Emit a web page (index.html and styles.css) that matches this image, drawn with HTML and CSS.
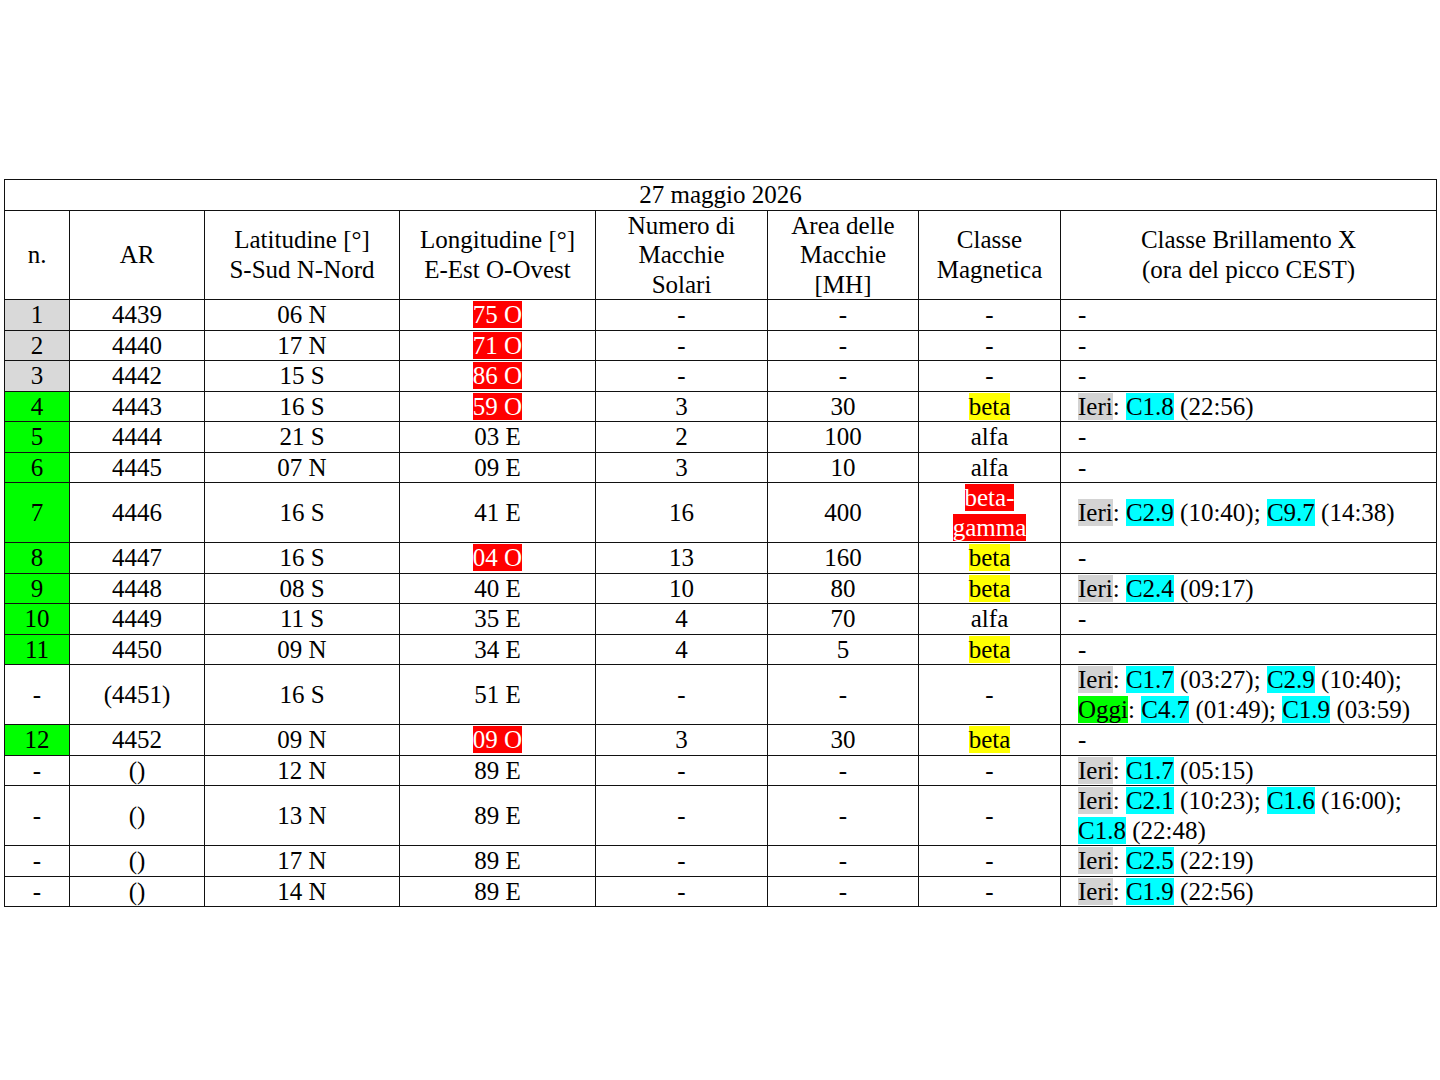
FILE: index.html
```html
<!DOCTYPE html>
<html lang="it">
<head>
<meta charset="utf-8">
<title>Macchie solari</title>
<link rel="stylesheet" href="styles.css">
</head>
<body>
<table class="sun">
  <colgroup>
    <col class="c1"><col class="c2"><col class="c3"><col class="c4"><col class="c5"><col class="c6"><col class="c7"><col class="c8">
  </colgroup>
  <tr><td colspan="8" class="title">27 maggio 2026</td></tr>
  <tr class="head">
    <td>n.</td>
    <td>AR</td>
    <td>Latitudine [°]<br>S-Sud N-Nord</td>
    <td>Longitudine [°]<br>E-Est O-Ovest</td>
    <td>Numero di<br>Macchie<br>Solari</td>
    <td>Area delle<br>Macchie<br>[MH]</td>
    <td>Classe<br>Magnetica</td>
    <td>Classe Brillamento X<br>(ora del picco CEST)</td>
  </tr>
  <tr><td class="gray">1</td><td>4439</td><td>06 N</td><td><span class="red">75 O</span></td><td>-</td><td>-</td><td>-</td><td class="fl">-</td></tr>
  <tr><td class="gray">2</td><td>4440</td><td>17 N</td><td><span class="red">71 O</span></td><td>-</td><td>-</td><td>-</td><td class="fl">-</td></tr>
  <tr><td class="gray">3</td><td>4442</td><td>15 S</td><td><span class="red">86 O</span></td><td>-</td><td>-</td><td>-</td><td class="fl">-</td></tr>
  <tr><td class="green">4</td><td>4443</td><td>16 S</td><td><span class="red">59 O</span></td><td>3</td><td>30</td><td><span class="yel">beta</span></td><td class="fl"><span class="hg">Ieri</span>: <span class="cy">C1.8</span> (22:56)</td></tr>
  <tr><td class="green">5</td><td>4444</td><td>21 S</td><td>03 E</td><td>2</td><td>100</td><td>alfa</td><td class="fl">-</td></tr>
  <tr><td class="green">6</td><td>4445</td><td>07 N</td><td>09 E</td><td>3</td><td>10</td><td>alfa</td><td class="fl">-</td></tr>
  <tr><td class="green">7</td><td>4446</td><td>16 S</td><td>41 E</td><td>16</td><td>400</td><td><span class="red">beta-<br>gamma</span></td><td class="fl"><span class="hg">Ieri</span>: <span class="cy">C2.9</span> (10:40); <span class="cy">C9.7</span> (14:38)</td></tr>
  <tr><td class="green">8</td><td>4447</td><td>16 S</td><td><span class="red">04 O</span></td><td>13</td><td>160</td><td><span class="yel">beta</span></td><td class="fl">-</td></tr>
  <tr><td class="green">9</td><td>4448</td><td>08 S</td><td>40 E</td><td>10</td><td>80</td><td><span class="yel">beta</span></td><td class="fl"><span class="hg">Ieri</span>: <span class="cy">C2.4</span> (09:17)</td></tr>
  <tr><td class="green">10</td><td>4449</td><td>11 S</td><td>35 E</td><td>4</td><td>70</td><td>alfa</td><td class="fl">-</td></tr>
  <tr><td class="green">11</td><td>4450</td><td>09 N</td><td>34 E</td><td>4</td><td>5</td><td><span class="yel">beta</span></td><td class="fl">-</td></tr>
  <tr><td>-</td><td>(4451)</td><td>16 S</td><td>51 E</td><td>-</td><td>-</td><td>-</td><td class="fl"><span class="hg">Ieri</span>: <span class="cy">C1.7</span> (03:27); <span class="cy">C2.9</span> (10:40);<br><span class="gr">Oggi</span>: <span class="cy">C4.7</span> (01:49); <span class="cy">C1.9</span> (03:59)</td></tr>
  <tr><td class="green">12</td><td>4452</td><td>09 N</td><td><span class="red">09 O</span></td><td>3</td><td>30</td><td><span class="yel">beta</span></td><td class="fl">-</td></tr>
  <tr><td>-</td><td>()</td><td>12 N</td><td>89 E</td><td>-</td><td>-</td><td>-</td><td class="fl"><span class="hg">Ieri</span>: <span class="cy">C1.7</span> (05:15)</td></tr>
  <tr><td>-</td><td>()</td><td>13 N</td><td>89 E</td><td>-</td><td>-</td><td>-</td><td class="fl"><span class="hg">Ieri</span>: <span class="cy">C2.1</span> (10:23); <span class="cy">C1.6</span> (16:00);<br><span class="cy">C1.8</span> (22:48)</td></tr>
  <tr><td>-</td><td>()</td><td>17 N</td><td>89 E</td><td>-</td><td>-</td><td>-</td><td class="fl"><span class="hg">Ieri</span>: <span class="cy">C2.5</span> (22:19)</td></tr>
  <tr><td>-</td><td>()</td><td>14 N</td><td>89 E</td><td>-</td><td>-</td><td>-</td><td class="fl"><span class="hg">Ieri</span>: <span class="cy">C1.9</span> (22:56)</td></tr>
</table>
</body>
</html>
```

FILE: styles.css
```css
html, body {
  margin: 0;
  padding: 0;
  background: #ffffff;
}

body {
  padding: 179px 0 0 4px;
  font-family: "Liberation Serif", "Times New Roman", serif;
  font-size: 25px;
  line-height: 29.5px;
  color: #000000;
}

.sun {
  border-collapse: collapse;
  table-layout: fixed;
  width: 1432px;
}

.c1 { width: 65px; }
.c2 { width: 135px; }
.c3 { width: 195px; }
.c4 { width: 196px; }
.c5 { width: 172px; }
.c6 { width: 151px; }
.c7 { width: 142px; }
.c8 { width: 376px; }

.sun td {
  border: 1px solid #111111;
  padding: 0;
  text-align: center;
  vertical-align: middle;
  white-space: nowrap;
}

.sun td.fl {
  text-align: left;
  padding-left: 17px;
}

.head td {
  text-align: center;
}

.gray { background: #d9d9d9; }
.green { background: #00ff00; }

.red {
  background: #ff0000;
  color: #ffffff;
}

.yel { background: #ffff00; }
.cy { background: #00ffff; }
.hg { background: #d3d3d3; }
.gr { background: #00ff00; }
```
